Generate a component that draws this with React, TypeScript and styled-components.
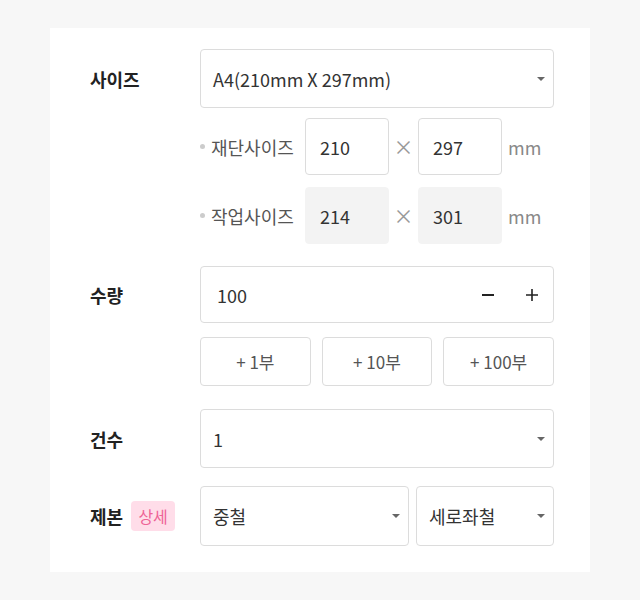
import styled, { createGlobalStyle } from 'styled-components';

const GlobalStyle = createGlobalStyle`
  html, body {
    margin: 0;
    padding: 0;
    background: #f7f7f7;
    font-family: 'Noto Sans CJK KR', 'Noto Sans', sans-serif;
    color: #333;
  }
`;

const Page = styled.div`
  width: 640px;
  height: 600px;
  padding-top: 28px;
  box-sizing: border-box;
`;

const Card = styled.div`
  width: 540px;
  margin-left: 50px;
  background: #fff;
  box-sizing: border-box;
  padding: 21px 36px 26px 40px;
  display: flex;
  flex-direction: column;
`;

const Row = styled.div<{ $gap?: number }>`
  display: grid;
  grid-template-columns: 110px 1fr;
  margin-top: ${({ $gap }) => $gap ?? 0}px;
`;

const Label = styled.div<{ $h?: number }>`
  font-size: 18px;
  font-weight: 700;
  color: #222;
  display: flex;
  align-items: center;
  gap: 8px;
  height: ${({ $h }) => $h ?? 59}px;
`;

const Badge = styled.span`
  display: inline-flex;
  align-items: center;
  justify-content: center;
  width: 44px;
  height: 30px;
  border-radius: 4px;
  background: #ffdde9;
  color: #ee6396;
  font-size: 16px;
  font-weight: 400;
`;

const Field = styled.div`
  display: flex;
  flex-direction: column;
`;

const Select = styled.div<{ $h?: number; $w?: number }>`
  flex: ${({ $w }) => ($w ? `0 0 ${$w}px` : '1 1 auto')};
  height: ${({ $h }) => $h ?? 59}px;
  border: 1px solid #dcdcdc;
  border-radius: 4px;
  box-sizing: border-box;
  display: flex;
  align-items: center;
  padding: 0 8px 0 12px;
  font-size: 18px;
  color: #333;
  span {
    flex: 1;
  }
`;

const Caret = styled.i`
  width: 0;
  height: 0;
  border-left: 4px solid transparent;
  border-right: 4px solid transparent;
  border-top: 4px solid #666;
`;

const SelectPair = styled.div`
  display: flex;
  gap: 7px;
`;

const SubRow = styled.div<{ $gap: number }>`
  display: flex;
  align-items: center;
  margin-top: ${({ $gap }) => $gap}px;
  height: 57px;
`;

const SubLabel = styled.div`
  width: 105px;
  display: flex;
  align-items: center;
  font-size: 18px;
  color: #555;
  &::before {
    content: '';
    width: 5px;
    height: 5px;
    border-radius: 50%;
    background: #cccccc;
    margin: 0 6px 0 0;
  }
`;

const SizeBox = styled.div<{ $readonly?: boolean }>`
  width: 84px;
  height: 100%;
  box-sizing: border-box;
  border: 1px solid ${({ $readonly }) => ($readonly ? '#f3f3f3' : '#dcdcdc')};
  background: ${({ $readonly }) => ($readonly ? '#f3f3f3' : '#fff')};
  border-radius: 4px;
  display: flex;
  align-items: center;
  padding-left: 14px;
  font-size: 18px;
  color: #333;
`;

const Times = styled.span`
  width: 29px;
  text-align: center;
  color: #999;
  font-size: 20px;
`;

const Unit = styled.span`
  margin-left: 6px;
  color: #888;
  font-size: 18px;
`;

const QtyBox = styled.div`
  height: 57px;
  border: 1px solid #dcdcdc;
  border-radius: 4px;
  box-sizing: border-box;
  display: flex;
  align-items: center;
  padding: 0 14px 0 16px;
  font-size: 18px;
  span {
    flex: 1;
  }
`;

const StepButton = styled.button`
  background: none;
  border: none;
  padding: 0;
  width: 14px;
  display: flex;
  align-items: center;
  justify-content: center;
  margin-left: 30px;
  cursor: pointer;
`;

const QuickRow = styled.div`
  display: grid;
  grid-template-columns: repeat(3, 1fr);
  gap: 11px;
  margin-top: 14px;
`;

const QuickButton = styled.button`
  height: 49px;
  border: 1px solid #dcdcdc;
  border-radius: 4px;
  background: #fff;
  font-family: inherit;
  font-size: 17px;
  color: #555;
  cursor: pointer;
`;

const Minus = () => (
  <svg width="12" height="12" viewBox="0 0 12 12">
    <path d="M0 6h12" stroke="#222" strokeWidth="2" />
  </svg>
);

const Plus = () => (
  <svg width="12" height="12" viewBox="0 0 12 12">
    <path d="M0 6h12M6 0v12" stroke="#222" strokeWidth="1.6" />
  </svg>
);

export default function App() {
  return (
    <>
      <GlobalStyle />
      <Page>
        <Card>
          <Row>
            <Label>사이즈</Label>
            <Field>
              <Select>
                <span>A4(210mm X 297mm)</span>
                <Caret />
              </Select>
              <SubRow $gap={10}>
                <SubLabel>재단사이즈</SubLabel>
                <SizeBox>210</SizeBox>
                <Times>×</Times>
                <SizeBox>297</SizeBox>
                <Unit>mm</Unit>
              </SubRow>
              <SubRow $gap={12}>
                <SubLabel>작업사이즈</SubLabel>
                <SizeBox $readonly>214</SizeBox>
                <Times>×</Times>
                <SizeBox $readonly>301</SizeBox>
                <Unit>mm</Unit>
              </SubRow>
            </Field>
          </Row>
          <Row $gap={22}>
            <Label $h={57}>수량</Label>
            <Field>
              <QtyBox>
                <span>100</span>
                <StepButton>
                  <Minus />
                </StepButton>
                <StepButton>
                  <Plus />
                </StepButton>
              </QtyBox>
              <QuickRow>
                <QuickButton>+ 1부</QuickButton>
                <QuickButton>+ 10부</QuickButton>
                <QuickButton>+ 100부</QuickButton>
              </QuickRow>
            </Field>
          </Row>
          <Row $gap={23}>
            <Label>건수</Label>
            <Field>
              <Select>
                <span>1</span>
                <Caret />
              </Select>
            </Field>
          </Row>
          <Row $gap={18}>
            <Label $h={60}>
              제본 <Badge>상세</Badge>
            </Label>
            <SelectPair>
              <Select $h={60} $w={209}>
                <span>중철</span>
                <Caret />
              </Select>
              <Select $h={60}>
                <span>세로좌철</span>
                <Caret />
              </Select>
            </SelectPair>
          </Row>
        </Card>
      </Page>
    </>
  );
}
